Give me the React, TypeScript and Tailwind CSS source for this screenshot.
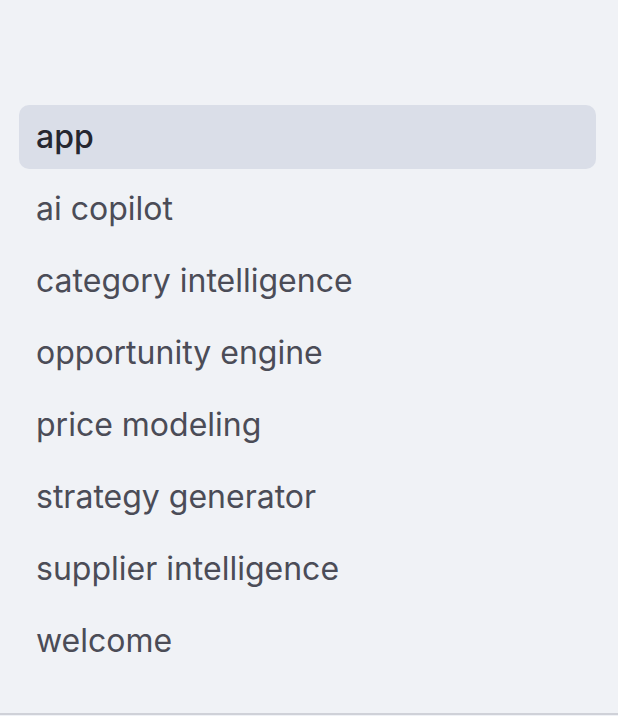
const pages = [
  'app',
  'ai copilot',
  'category intelligence',
  'opportunity engine',
  'price modeling',
  'strategy generator',
  'supplier intelligence',
  'welcome',
];

export default function App() {
  const active = 'app';
  return (
    <div className="h-[716px] w-[618px] bg-[#f0f2f6] font-['Inter',sans-serif]">
      <nav className="flex h-[715px] flex-col gap-2 border-b-2 border-[#cfd1d8] pl-[19px] pr-[22px] pt-[105px]">
        {pages.map((p) => (
          <a
            key={p}
            className={
              p === active
                ? 'flex h-16 items-center rounded-[10px] bg-[#dadee8] px-[17px] text-[32px] font-medium text-[#262730]'
                : 'flex h-16 items-center rounded-[10px] px-[17px] text-[32px] text-[#4b4c57]'
            }
          >
            {p}
          </a>
        ))}
      </nav>
    </div>
  );
}
